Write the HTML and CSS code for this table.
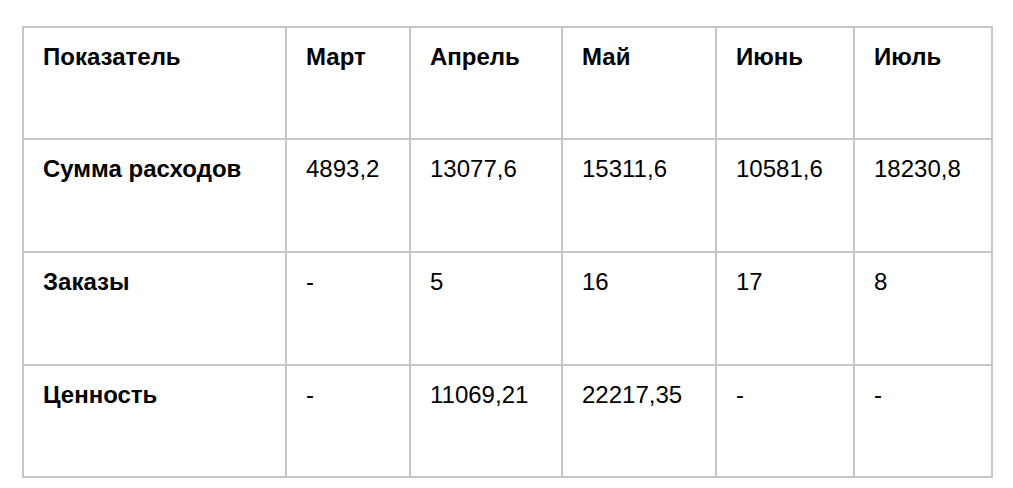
FILE: index.html
```html
<!DOCTYPE html>
<html lang="ru">
<head>
<meta charset="utf-8">
<link rel="stylesheet" href="styles.css">
</head>
<body>
<div class="grid">
  <div class="cell head">Показатель</div>
  <div class="cell head">Март</div>
  <div class="cell head">Апрель</div>
  <div class="cell head">Май</div>
  <div class="cell head">Июнь</div>
  <div class="cell head">Июль</div>

  <div class="cell head">Сумма расходов</div>
  <div class="cell">4893,2</div>
  <div class="cell">13077,6</div>
  <div class="cell">15311,6</div>
  <div class="cell">10581,6</div>
  <div class="cell">18230,8</div>

  <div class="cell head">Заказы</div>
  <div class="cell">-</div>
  <div class="cell">5</div>
  <div class="cell">16</div>
  <div class="cell">17</div>
  <div class="cell">8</div>

  <div class="cell head">Ценность</div>
  <div class="cell">-</div>
  <div class="cell">11069,21</div>
  <div class="cell">22217,35</div>
  <div class="cell">-</div>
  <div class="cell">-</div>
</div>
</body>
</html>
```

FILE: styles.css
```css
html, body {
  margin: 0;
  background: #ffffff;
}
body {
  padding: 26px 0 0 22px;
  font-family: "Liberation Sans", Arial, sans-serif;
  font-size: 24px;
  line-height: 28px;
  color: #000000;
}
.grid {
  display: grid;
  width: max-content;
  grid-template-columns: 261px 122px 150px 152px 136px 136px;
  grid-template-rows: 110px 111px 111px 110px;
  gap: 2px;
  padding: 2px;
  background: #c6c6c6;
}
.cell {
  background: #ffffff;
  padding: 15px 12px 0 19px;
  white-space: nowrap;
}
.head {
  font-weight: bold;
}
```
